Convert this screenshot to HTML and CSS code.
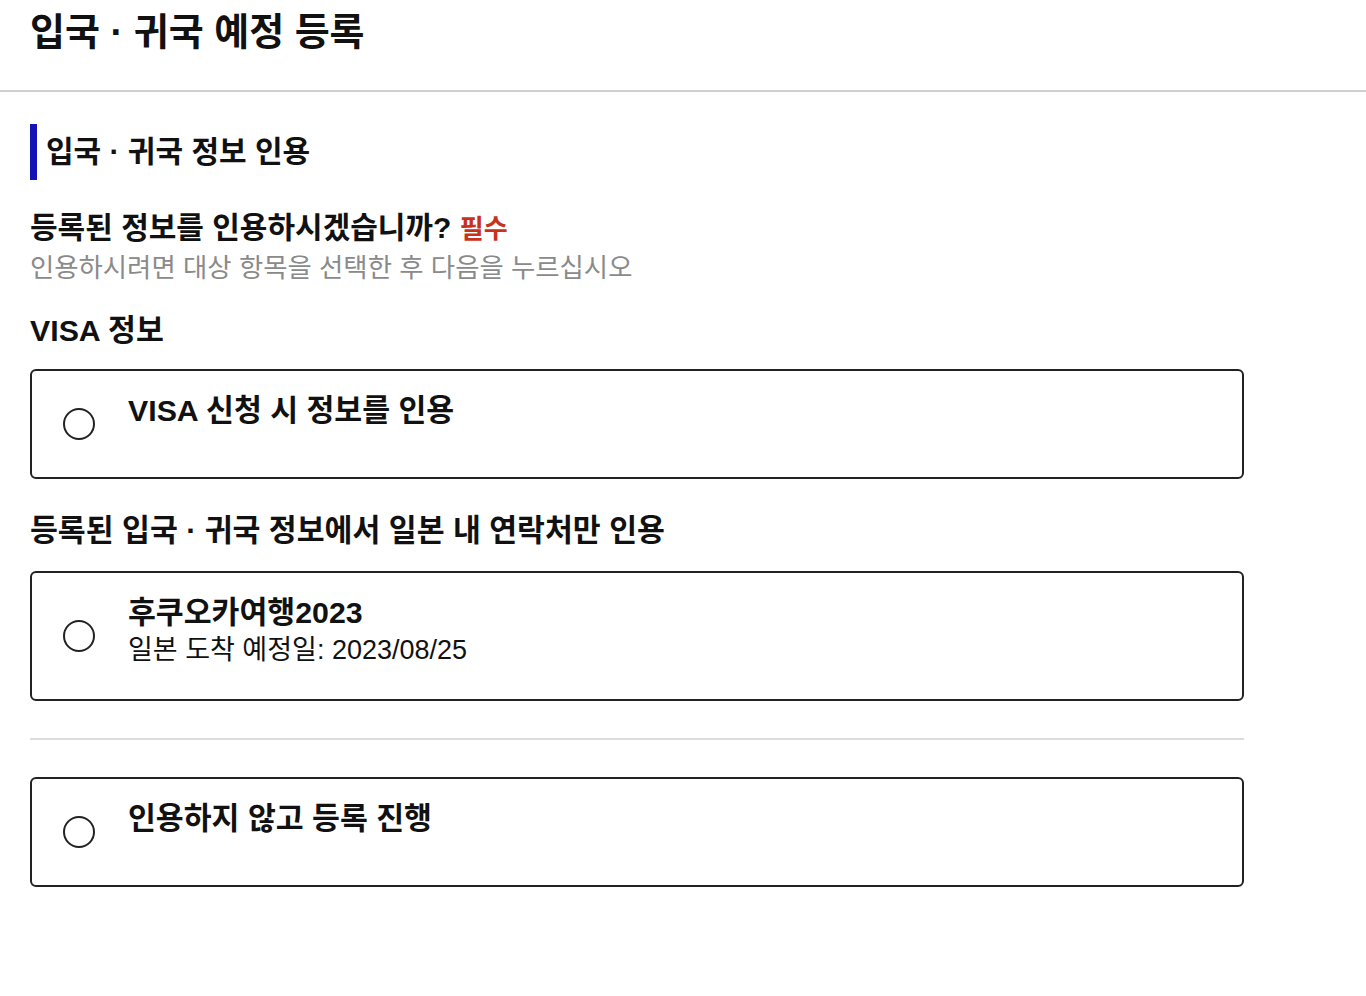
FILE: index.html
```html
<!DOCTYPE html>
<html lang="ko">
<head>
<meta charset="utf-8">
<title>입국 · 귀국 예정 등록</title>
<link rel="stylesheet" href="styles.css">
</head>
<body>
<header class="page-header">
  <h1 class="page-title">입국 · 귀국 예정 등록</h1>
</header>
<main class="content">
  <h2 class="section-title">입국 · 귀국 정보 인용</h2>
  <p class="question">등록된 정보를 인용하시겠습니까? <span class="required">필수</span></p>
  <p class="hint">인용하시려면 대상 항목을 선택한 후 다음을 누르십시오</p>

  <h3 class="group-label group-first">VISA 정보</h3>
  <label class="option">
    <span class="radio"></span>
    <span class="opt-text">
      <span class="opt-title">VISA 신청 시 정보를 인용</span>
    </span>
  </label>

  <h3 class="group-label">등록된 입국 · 귀국 정보에서 일본 내 연락처만 인용</h3>
  <label class="option">
    <span class="radio"></span>
    <span class="opt-text">
      <span class="opt-title">후쿠오카여행2023</span>
      <span class="opt-sub">일본 도착 예정일: 2023/08/25</span>
    </span>
  </label>

  <hr class="divider">

  <label class="option">
    <span class="radio"></span>
    <span class="opt-text">
      <span class="opt-title">인용하지 않고 등록 진행</span>
    </span>
  </label>
</main>
</body>
</html>
```

FILE: styles.css
```css
* { box-sizing: border-box; }

body {
  margin: 0;
  background: #fff;
  color: #111;
  font-family: "Liberation Sans", "Noto Sans CJK KR", sans-serif;
}

.page-header {
  padding: 8px 30px 0;
  height: 92px;
  border-bottom: 2px solid #cfcfcf;
}

.page-title {
  margin: 0;
  font-size: 38px;
  line-height: 48px;
  font-weight: 700;
}

.content {
  width: 1244px;
  padding: 0 0 0 30px;
}

.section-title {
  margin: 32px 0 0;
  border-left: 7px solid #1414b4;
  padding-left: 9px;
  font-size: 30px;
  line-height: 56px;
  font-weight: 700;
}

.question {
  margin: 28px 0 0;
  font-size: 30px;
  line-height: 40px;
  font-weight: 700;
}

.required {
  color: #c8321c;
  font-size: 26px;
}

.hint {
  margin: 2px 0 0;
  color: #8a8a8a;
  font-size: 26.4px;
  line-height: 34px;
}

.group-label {
  margin: 32px 0 20px;
  font-size: 30.3px;
  line-height: 40px;
  font-weight: 700;
}

.group-first {
  margin-top: 26px;
  margin-bottom: 18px;
}

.option {
  display: flex;
  align-items: center;
  gap: 33px;
  border: 2px solid #222;
  border-radius: 6px;
  padding: 20px 31px;
  cursor: pointer;
}

.radio {
  flex: none;
  width: 32px;
  height: 32px;
  border: 2px solid #222;
  border-radius: 50%;
}

.opt-text {
  align-self: flex-start;
  display: flex;
  flex-direction: column;
  min-height: 66px;
  padding-bottom: 12px;
}

.opt-title {
  font-size: 30.3px;
  line-height: 40px;
  font-weight: 700;
}

.opt-sub {
  font-size: 27px;
  line-height: 34px;
}

.divider {
  margin: 37px 0 37px;
  border: 0;
  border-top: 2px solid #dcdcdc;
}
```
